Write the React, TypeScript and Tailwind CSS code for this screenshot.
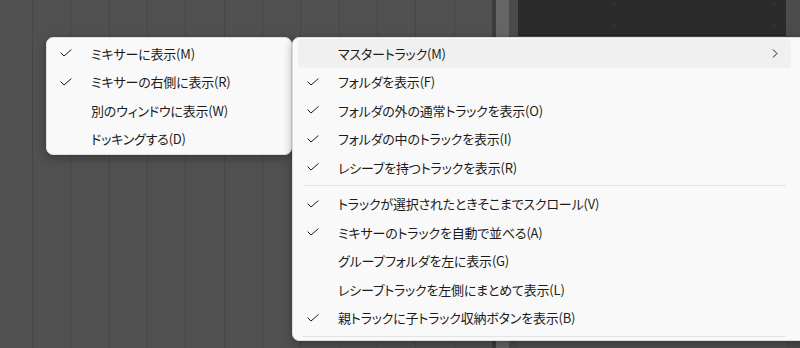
import React from "react";

type Item = { label: string; checked?: boolean; submenu?: boolean } | "sep";

const leftItems: Item[] = [
  { label: "ミキサーに表示(M)", checked: true },
  { label: "ミキサーの右側に表示(R)", checked: true },
  { label: "別のウィンドウに表示(W)" },
  { label: "ドッキングする(D)" },
];

const rightItems: Item[] = [
  { label: "マスタートラック(M)", submenu: true },
  { label: "フォルダを表示(F)", checked: true },
  { label: "フォルダの外の通常トラックを表示(O)", checked: true },
  { label: "フォルダの中のトラックを表示(I)", checked: true },
  { label: "レシーブを持つトラックを表示(R)", checked: true },
  "sep",
  { label: "トラックが選択されたときそこまでスクロール(V)", checked: true },
  { label: "ミキサーのトラックを自動で並べる(A)", checked: true },
  { label: "グループフォルダを左に表示(G)" },
  { label: "レシーブトラックを左側にまとめて表示(L)" },
  { label: "親トラックに子トラック収納ボタンを表示(B)", checked: true },
  "sep",
];

const Check = () => (
  <svg width="12" height="8" viewBox="0 0 12 8" fill="none">
    <path d="M0.6 3.6 L4 7 L11.4 0.6" stroke="#1b1b1b" strokeWidth="1" />
  </svg>
);

const Chevron = () => (
  <svg width="6" height="9" viewBox="0 0 6 9" fill="none">
    <path d="M1 0.5 L5 4.5 L1 8.5" stroke="#1b1b1b" strokeWidth="1" />
  </svg>
);

const MenuList = ({ items, hovered }: { items: Item[]; hovered?: number }) => (
  <div className="flex flex-col">
    {items.map((item, i) =>
      item === "sep" ? (
        <div key={i} className="flex h-[8px] items-center px-[5px]">
          <div className="h-px w-full bg-[#e3e3e3]" />
        </div>
      ) : (
        <div
          key={i}
          className={
            "flex h-[28.5px] items-center rounded-[4px] pl-[9px] pr-[13px] " +
            (hovered === i ? "bg-[#f0f0f0]" : "")
          }
        >
          <div className="flex w-[12px] items-center">{item.checked && <Check />}</div>
          <span className="ml-[19px] flex-1 whitespace-nowrap">{item.label}</span>
          {item.submenu && <Chevron />}
        </div>
      )
    )}
  </div>
);

export default function App() {
  return (
    <div className="relative h-[348px] w-[800px] overflow-hidden bg-[#505050] font-['Noto_Sans_CJK_JP','Noto_Sans',sans-serif] text-[13px] tracking-[-0.2px] text-[#1b1b1b] [font-feature-settings:'palt']">
      {/* track lanes behind the menus */}
      <div className="flex h-full">
        <div className="w-[32px] shrink-0" />
        {Array.from({ length: 12 }).map((_, i) => (
          <div key={i} className="w-[38.33px] shrink-0 border-l border-[#464646]" />
        ))}
        <div className="w-[4px] shrink-0 bg-[#3c3c3c]" />
        <div className="w-[13px] shrink-0 bg-[#656565]" />
        <div className="w-[9px] shrink-0 bg-[#4a4a4a]" />
        <div className="w-[268px] shrink-0">
          <div className="relative h-[36px] border-b border-[#1e1e1e] bg-[#2b2b2b]">
            <span className="absolute left-[96px] top-[3px] h-px w-px bg-[#555]" />
            <span className="absolute left-[96px] top-[25px] h-px w-px bg-[#555]" />
            <span className="absolute left-[256px] top-[3px] h-px w-px bg-[#555]" />
            <span className="absolute left-[256px] top-[25px] h-px w-px bg-[#555]" />
          </div>
        </div>
        <div className="flex-1 bg-[#4c4c4c]" />
      </div>

      {/* left menu */}
      <div className="absolute left-[46px] top-[37px] w-[246px] rounded-[7px] border border-[#dcdcdc] bg-[#f9f9f9] px-[4px] pb-px pt-px shadow-[0_3px_10px_rgba(0,0,0,0.3)]">
        <MenuList items={leftItems} />
      </div>

      {/* right menu */}
      <div className="absolute left-[292px] top-[37px] w-[520px] rounded-[7px] border border-[#dcdcdc] bg-[#f9f9f9] pl-[5px] pr-[20px] pt-px shadow-[0_3px_10px_rgba(0,0,0,0.3)]">
        <MenuList items={rightItems} hovered={0} />
      </div>
    </div>
  );
}
